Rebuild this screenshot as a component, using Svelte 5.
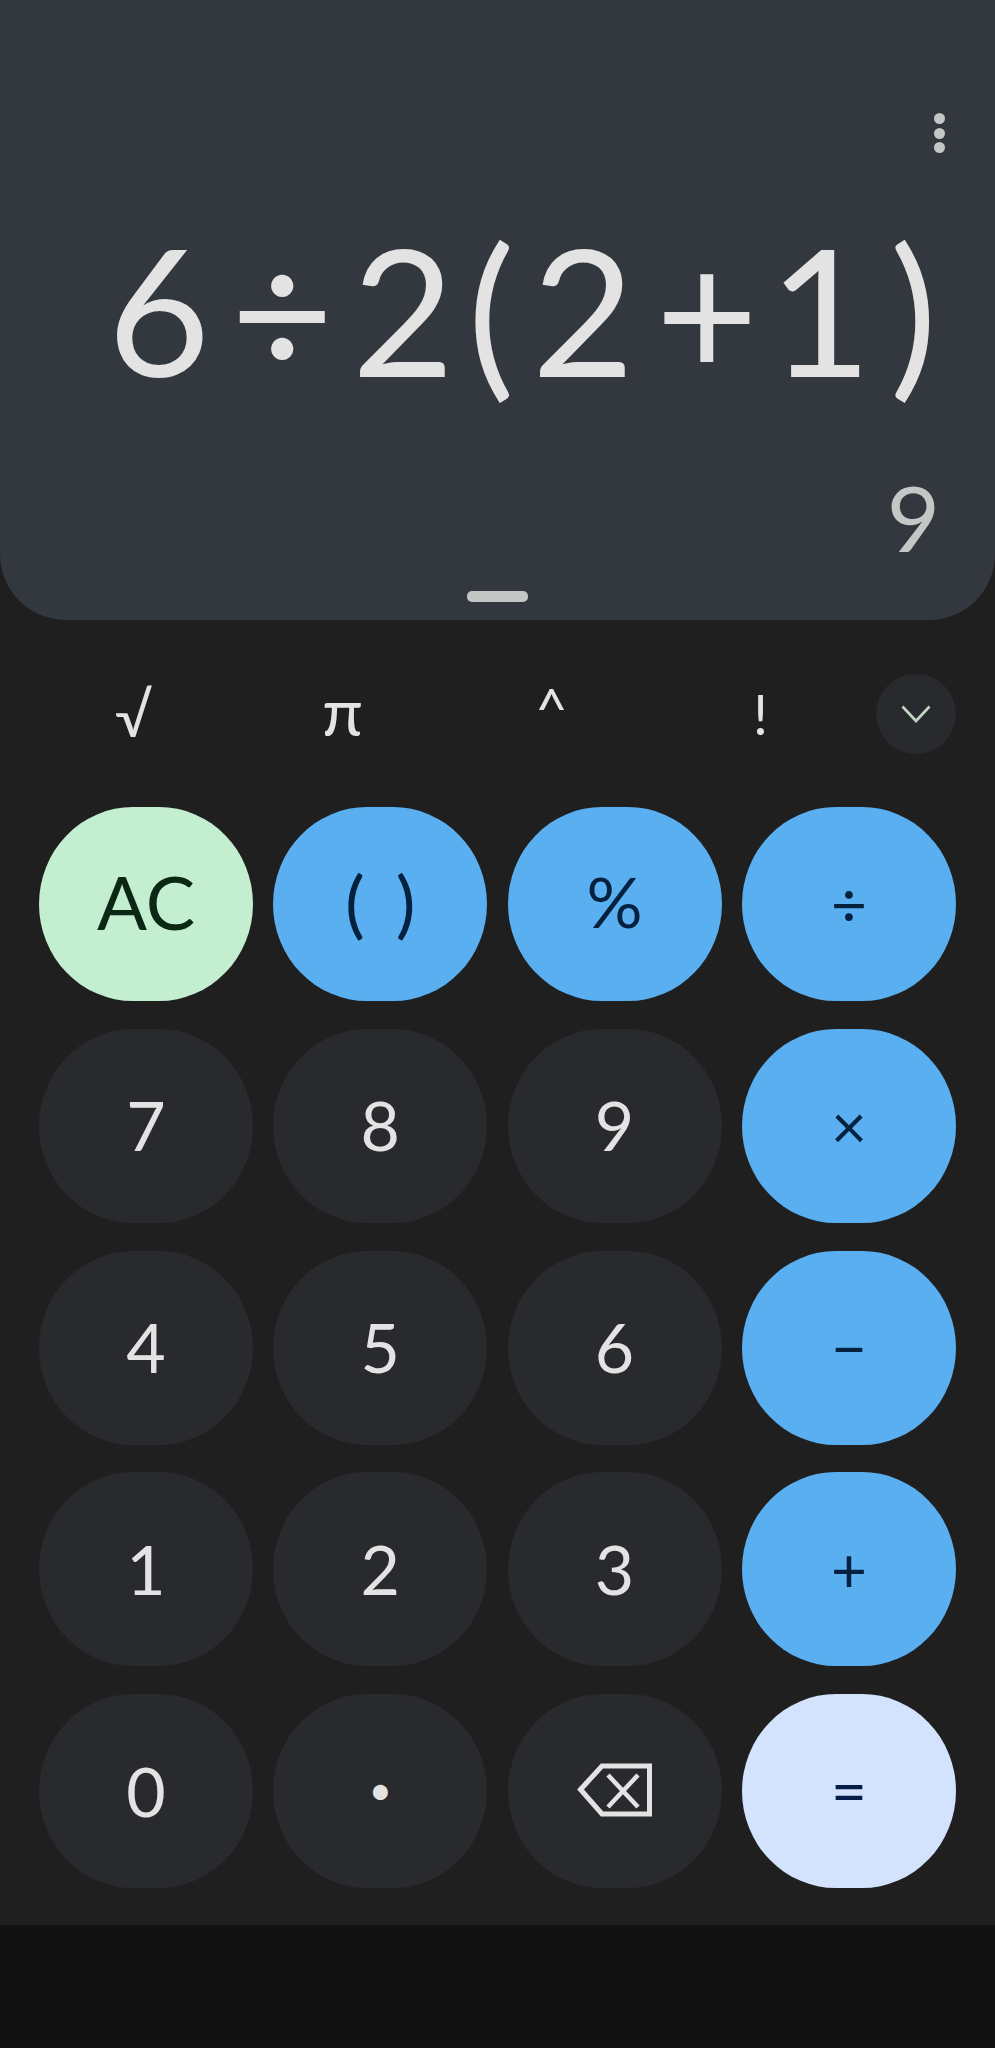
<script>
  const sci = [['√','root'], ['π','pi'], ['^','hat'], ['!','']];
  const expr = [
    ['6', 0], ['÷', 21], ['2', 18], ['(', 13], ['2', 17], ['+', 21], ['1', 11], [')', 18]
  ];
  const rows = [
    [['AC','ac'],['( )','op paren'],['%','op pct'],['÷','op small']],
    [['7',''],['8',''],['9',''],['×','op small']],
    [['4',''],['5',''],['6',''],['−','op small']],
    [['1',''],['2',''],['3',''],['+','op small']],
    [['0',''],['•','dot'],['⌫','back'],['=','eq small']]
  ];
</script>

<div class="app">
  <section class="panel">
    <div class="menu" aria-label="More options"><i></i><i></i><i></i></div>
    <div class="expr">{#each expr as [c, gap]}<span style:margin-left="{gap}px">{c}</span>{/each}</div>
    <div class="result">9</div>
    <div class="handle"></div>
  </section>

  <section class="sci">
    {#each sci as [s, cls]}<div class="sci-key {cls}">{s}</div>{/each}
    <div class="chev">
      <svg width="30" height="18" viewBox="0 0 30 18" fill="none"><path d="M1.5 1.5 15 16 28.5 1.5" stroke="#c3d6c3" stroke-width="2.6"/></svg>
    </div>
  </section>

  <section class="pad">
    {#each rows.flat() as [label, cls]}
      <div class="key {cls}">
        {#if cls === 'back'}
          <svg width="76" height="54" viewBox="0 0 76 54" fill="none" stroke="#e3e3e3">
            <path d="M3.5 26.5 25 3h47.5v48H25Z" stroke-width="5"/>
            <path d="M31 12 61 44M61 12 31 44" stroke-width="4.5"/>
          </svg>
        {:else}
          <span>{label}</span>
        {/if}
      </div>
    {/each}
  </section>

  <footer class="nav"></footer>
</div>

<style>
  :global(body) { margin: 0; background: #121212; }
  .app {
    width: 995px;
    height: 2048px;
    display: flex;
    flex-direction: column;
    background: #1f1f1f;
    font-family: Lato, "Open Sans", sans-serif;
    color: #e3e3e3;
    overflow: hidden;
  }
  .panel {
    position: relative;
    height: 620px;
    flex: none;
    box-sizing: border-box;
    padding: 209px 58px 0 0;
    background: #33373e;
    border-radius: 0 0 66px 66px;
    text-align: right;
  }
  .menu {
    position: absolute;
    top: 113px;
    right: 50px;
    display: flex;
    flex-direction: column;
    gap: 3.5px;
  }
  .menu i {
    display: block;
    width: 11px;
    height: 11px;
    border-radius: 50%;
    background: #c4c7c5;
  }
  .expr {
    font-size: 177px;
    line-height: 200px;
    white-space: nowrap;
  }
  .result {
    margin-top: 58px;
    margin-right: -3px;
    font-size: 92px;
    line-height: 100px;
    color: #c4c7c5;
  }
  .handle {
    position: absolute;
    left: 467px;
    top: 591px;
    width: 61px;
    height: 11px;
    border-radius: 5px;
    background: #c4c7c5;
  }
  .sci {
    display: grid;
    grid-template-columns: repeat(4, 209px) 80px;
    align-items: center;
    height: 80px;
    margin-top: 54px;
    padding-left: 29px;
    font-size: 56px;
  }
  .sci-key { text-align: center; line-height: 80px; }
  .sci-key.root { font-size: 60px; }
  .sci-key.pi { font-size: 66px; margin-top: -6px; }
  .sci-key.hat { margin-top: -10px; }
  .chev {
    width: 80px;
    height: 80px;
    margin-left: 11px;
    border-radius: 50%;
    background: #292a2e;
    display: flex;
    align-items: center;
    justify-content: center;
  }
  .pad {
    display: grid;
    grid-template-columns: repeat(4, 214px);
    grid-auto-rows: 194px;
    column-gap: 20.3px;
    row-gap: 27.8px;
    margin-top: 53px;
    padding-left: 39px;
  }
  .key {
    display: flex;
    align-items: center;
    justify-content: center;
    border-radius: 94px / 97px;
    background: #292a2e;
    font-size: 68px;
    padding-bottom: 2px;
    box-sizing: border-box;
  }
  .ac { background: #c3eed0; color: #0a2814; font-size: 74px; padding-bottom: 6px; }
  .op { background: #5aaff1; color: #04213f; }
  .eq { background: #d3e3fd; color: #041e49; }
  .small { font-size: 62px; }
  .paren { font-size: 74px; word-spacing: 12px; padding-bottom: 6px; }
  .pct { padding-bottom: 6px; font-size: 70px; }
  .dot { font-size: 40px; }
  .nav { flex: 1; margin-top: 37px; background: #121212; }
</style>
